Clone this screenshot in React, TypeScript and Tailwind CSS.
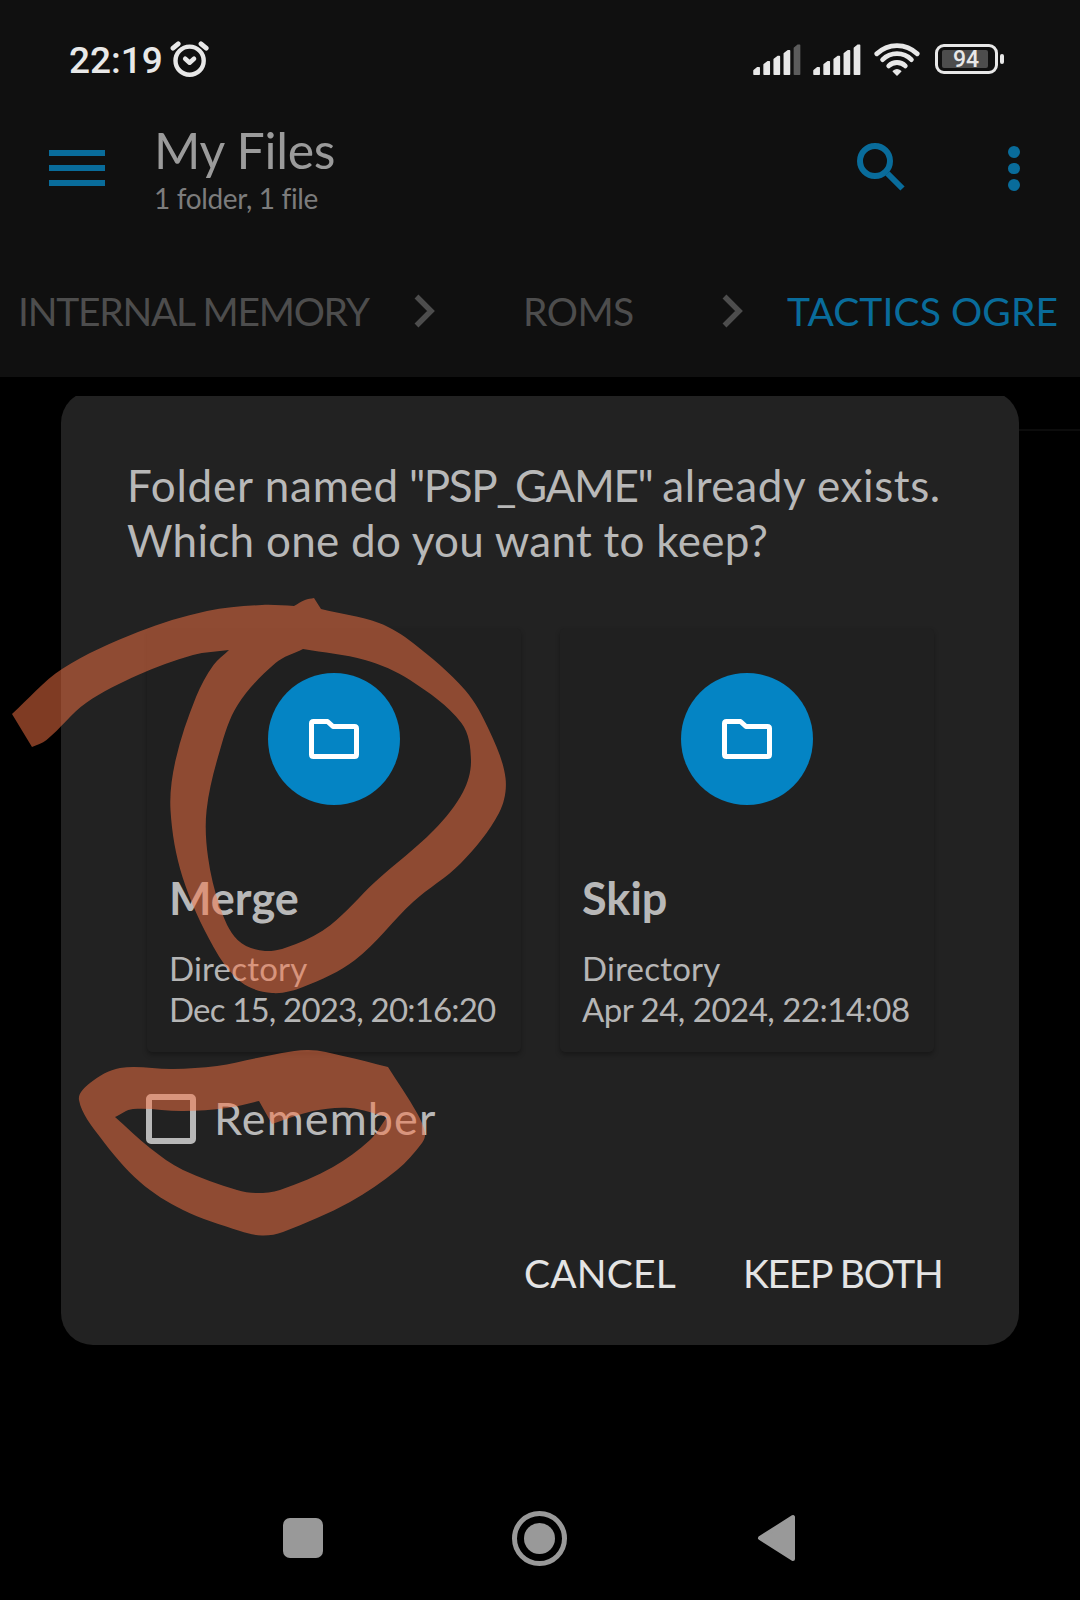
type Point = [number, number];

// Unit tangent at pts[i], taken from its two neighbours.
function tangent(pts: Point[], i: number): Point {
  const a = pts[Math.max(i - 1, 0)];
  const b = pts[Math.min(i + 1, pts.length - 1)];
  const len = Math.hypot(b[0] - a[0], b[1] - a[1]) || 1;
  return [(b[0] - a[0]) / len, (b[1] - a[1]) / len];
}

// Smooth curve through the points of each run; the joints between runs stay sharp.
function outline(runs: Point[][]): string {
  let d = `M${runs[0][0].join(" ")}`;
  for (const pts of runs) {
    for (let i = 0; i < pts.length - 1; i++) {
      const p = pts[i];
      const q = pts[i + 1];
      const h = Math.hypot(q[0] - p[0], q[1] - p[1]) / 3;
      const s = tangent(pts, i);
      const e = tangent(pts, i + 1);
      d += `C${p[0] + s[0] * h} ${p[1] + s[1] * h} ${q[0] - e[0] * h} ${q[1] - e[1] * h} ${q[0]} ${q[1]}`;
    }
  }
  return d + "Z";
}

const circleMark =
  outline([
    [[12, 714], [62, 669], [138, 632], [207, 611], [262, 605], [294, 606]],
    [[294, 606], [305, 600], [314, 598]],
    [[314, 598], [321, 609]],
    [[321, 609], [379, 623], [413, 643], [465, 690], [489, 730], [505.5, 778], [499, 813], [461, 863], [413, 902], [355, 960], [303, 987], [272, 993], [241, 982], [213.5, 947], [182.5, 877], [170.5, 810], [175.6, 760], [196, 697], [213.5, 665], [229, 650]],
    [[229, 650], [193, 655], [138, 675], [86, 703], [46.5, 740], [32, 747]],
    [[32, 747], [12, 714]],
  ]) +
  outline([
    [[303, 649], [275.5, 663], [237.6, 705], [220, 750], [206.6, 810], [208, 857], [220, 907], [237.6, 940], [265, 951], [296, 944], [330.6, 925], [375, 882], [434, 830], [463, 792], [471, 760], [461.4, 723], [410, 680], [365, 660], [303, 649]],
  ]);

const lensMark =
  outline([
    [[388, 1067], [417, 1113], [425, 1133], [422, 1143], [397, 1170], [350, 1202], [283, 1232], [262, 1235.5], [240, 1231], [183, 1210], [140, 1182], [100, 1137], [79, 1100], [90, 1083], [120, 1068], [173, 1069], [217, 1066], [257, 1058], [307, 1050], [343, 1056], [388, 1067]],
  ]) +
  outline([
    [[115, 1117], [133, 1109], [183, 1111], [227, 1108], [259, 1101]],
    [[259, 1101], [272, 1124]],
    [[272, 1124], [313, 1111], [350, 1108], [387, 1117]],
    [[387, 1117], [370, 1140], [333, 1167], [280, 1190], [257, 1193], [237, 1190], [183, 1170], [150, 1148], [115, 1117]],
  ]);

function Signal({ weak = false }: { weak?: boolean }) {
  const tops = [23.7, 17.8, 12.5, 6.8, 1.2];
  return (
    <svg className="h-8 w-12 shrink-0" viewBox="0 0 48 32">
      {tops.map((t, i) => {
        const x = i * 10.1 + 1;
        return (
          <path
            key={t}
            d={`M${x} ${t + 2.8}L${x + 3.6} ${t}H${x + 5.2}V30.2H${x}Z`}
            fill={weak && i === 4 ? "#5c5c5c" : "#e8e8e8"}
            stroke={weak && i === 4 ? "#5c5c5c" : "#e8e8e8"}
            strokeWidth="1.5"
            strokeLinejoin="round"
          />
        );
      })}
    </svg>
  );
}

function StatusBar() {
  return (
    <div className="flex h-[120px] items-start pl-[69px] pt-[40px]">
      <span className="w-[101px] whitespace-nowrap font-[Roboto] text-[37px] font-medium leading-[42px] text-[#e8e8e8]">22:19</span>
      <svg className="h-[38px] w-[40px]" viewBox="0 0 40 38" fill="none" stroke="#e8e8e8" strokeLinecap="round">
        <circle cx="19.600" cy="20.700" r="14.100" strokeWidth="4.400" />
        <path d="M15.200 18.800L19.600 22.700L24 18.800" strokeWidth="4.600" strokeLinejoin="round" />
        <path d="M3 8.200L8.200 3.800M36.200 8.200L31 3.800" strokeWidth="4.800" />
      </svg>
      <div className="ml-[543px] flex items-start pt-[4px]">
        <Signal weak />
        <div className="w-3" />
        <Signal />
        <svg className="-mt-[2px] ml-[13px] h-[36px] w-[46px]" viewBox="0 0 46 36" fill="none" stroke="#e8e8e8" strokeLinecap="round">
          <path d="M2.800 11.800A28.800 28.800 0 0 1 43.200 11.800" strokeWidth="4.800" />
          <path d="M8.600 17.600A20.500 20.500 0 0 1 37.400 17.600" strokeWidth="4.800" />
          <path d="M14.700 23.900A11.800 11.800 0 0 1 31.300 23.900" strokeWidth="4.800" />
          <path d="M19.300 29.300Q23 26.300 26.700 29.300L23 33Z" fill="#e8e8e8" strokeWidth="1.500" strokeLinejoin="round" />
        </svg>
        <div className="ml-[15px] flex h-[30px] w-[63px] items-center rounded-[9px] border-[3px] border-[#e8e8e8] pl-[4px]">
          <div className="h-[18px] w-[46px] rounded-[2px] bg-[#4d4d4d] pl-[11px] font-[Roboto] text-[23px] font-medium leading-[20px] text-[#e8e8e8]">94</div>
        </div>
        <div className="ml-[2px] mt-[10px] h-[10px] w-[4px] rounded-[2px] bg-[#e8e8e8]" />
      </div>
    </div>
  );
}

function TitleBar() {
  return (
    <div className="flex h-[132px] items-start pl-[49px]">
      <div className="mt-[30px] flex w-[56px] flex-col gap-[9px]">
        <div className="h-[6px] bg-[#096c9b]" />
        <div className="h-[6px] bg-[#096c9b]" />
        <div className="h-[6px] bg-[#096c9b]" />
      </div>
      <div className="ml-[49px] w-[703px] whitespace-nowrap">
        <div className="h-[60px] text-[50px] leading-[60px] tracking-[-0.25px] text-[#9b9b9b]">My Files</div>
        <div className="text-[28px] leading-[36px] tracking-[-0.35px] text-[#7c7c7c]">1 folder, 1 file</div>
      </div>
      <svg className="mt-[23px] h-[48px] w-[48px]" viewBox="0 0 48 48" fill="none" stroke="#096c9b" strokeWidth="6">
        <circle cx="18" cy="18" r="15" />
        <path d="M30.500 30.500L45.500 45.500" />
      </svg>
      <div className="ml-[103px] mt-[26px] flex flex-col gap-[5px]">
        <div className="size-[11.500px] rounded-full bg-[#096c9b]" />
        <div className="size-[11.500px] rounded-full bg-[#096c9b]" />
        <div className="size-[11.500px] rounded-full bg-[#096c9b]" />
      </div>
    </div>
  );
}

function Chevron() {
  return (
    <svg className="h-[34px] w-[22px] shrink-0" viewBox="0 0 22 34" fill="none" stroke="#4d4d4d" strokeWidth="5.500">
      <path d="M2.500 2.500L17 17L2.500 31.500" />
    </svg>
  );
}

function Breadcrumbs() {
  return (
    <div className="flex h-[117px] items-center whitespace-nowrap pl-[18px] text-[39px] leading-[48px] text-[#4d4d4d]">
      <span className="w-[396px] tracking-[-1.25px]">INTERNAL MEMORY</span>
      <Chevron />
      <span className="ml-[87px] w-[199px] tracking-[-0.5px]">ROMS</span>
      <Chevron />
      <span className="ml-[43px] tracking-[0.1px] text-[#096c9b]">TACTICS OGRE</span>
    </div>
  );
}

function FolderCard({ title, date, dateClass }: { title: string; date: string; dateClass: string }) {
  return (
    <div className="flex h-[424px] w-[374px] flex-col rounded-[5px] bg-[#202020] pl-[22px] pt-[45px] shadow-[0_3px_5px_rgba(0,0,0,0.3)]">
      <div className="ml-[99px] flex size-[132px] items-center justify-center rounded-full bg-[#0484c4]">
        <svg className="h-[42px] w-[52px]" viewBox="0 0 52 42" fill="none" stroke="#fff" strokeWidth="5" strokeLinejoin="round">
          <path d="M5.500 3.500H19.500L25 8.500H46.500Q48.500 8.500 48.500 10.500V36.500Q48.500 38.500 46.500 38.500H5.500Q3.500 38.500 3.500 36.500V5.500Q3.500 3.500 5.500 3.500Z" />
        </svg>
      </div>
      <div className="mt-[63px] h-[60px] text-[45px] font-bold leading-[60px] text-[#b8b8b8]">{title}</div>
      <div className="mt-[20px] whitespace-nowrap text-[33px] leading-[41px] text-[#b5b5b5]">
        <div className="tracking-[0.2px]">Directory</div>
        <div className={dateClass}>{date}</div>
      </div>
    </div>
  );
}

function Dialog() {
  return (
    <div className="relative ml-[61px] mt-[19px] h-[949px] w-[958px] overflow-hidden">
      <div className="-mt-[5px] h-[954px] rounded-[32px] bg-[#222222] pl-[66px] pt-[67px]">
        <div className="h-[110px] whitespace-nowrap text-[44px] leading-[55px] text-[#b8b8b8]">
          <div>
            <span className="tracking-[0.75px]">Folder named</span>
            <span className="tracking-[-1.4px]"> "PSP_GAME" </span>
            <span className="tracking-[0.6px]">already exists.</span>
          </div>
          <div className="tracking-[0.28px]">Which one do you want to keep?</div>
        </div>
        <div className="ml-[20px] mt-[60px] flex gap-[39px]">
          <FolderCard title="Merge" date="Dec 15, 2023, 20:16:20" dateClass="tracking-[-0.83px]" />
          <FolderCard title="Skip" date="Apr 24, 2024, 22:14:08" dateClass="tracking-[-0.5px]" />
        </div>
        <div className="ml-[19px] mt-[42px] flex h-[50px] items-center">
          <div className="size-[50px] rounded-[5px] border-[6px] border-[#b8b8b8]" />
          <span className="-mt-[2px] ml-[18px] text-[45px] leading-[50px] tracking-[1.1px] text-[#b8b8b8]">Remember</span>
        </div>
        <div className="mt-[105px] flex whitespace-nowrap pl-[397px] text-[39px] leading-[48px] text-[#e4e4e4]">
          <span className="w-[219px] tracking-[0.2px]">CANCEL</span>
          <span className="tracking-[-1.3px]">KEEP BOTH</span>
        </div>
      </div>
    </div>
  );
}

function NavBar() {
  return (
    <div className="mt-auto flex h-[124px] items-center pl-[283px]">
      <div className="size-[40px] rounded-[7px] bg-[#999999]" />
      <div className="ml-[189px] flex size-[55px] items-center justify-center rounded-full border-[5px] border-[#999999]">
        <div className="size-[31px] rounded-full bg-[#999999]" />
      </div>
      <svg className="ml-[190px] h-[48px] w-[39px]" viewBox="0 0 39 48" fill="#999999" stroke="#999999" strokeWidth="4" strokeLinejoin="round">
        <path d="M3 24L36 3V45Z" />
      </svg>
    </div>
  );
}

export default function App() {
  return (
    <div className="relative flex h-[1600px] w-[1080px] flex-col overflow-hidden bg-black font-[Lato,sans-serif]">
      <header className="h-[377px] bg-[#101010]">
        <StatusBar />
        <TitleBar />
        <Breadcrumbs />
      </header>
      <div className="absolute right-0 top-[429px] h-[2px] w-[80px] bg-[#0c0c0c]" />
      <Dialog />
      <NavBar />
      <svg className="pointer-events-none absolute inset-0 h-[1600px] w-[1080px]" viewBox="0 0 1080 1600" fill="#fa7444" fillOpacity="0.51" fillRule="evenodd">
        <path d={circleMark} />
        <path d={lensMark} />
      </svg>
    </div>
  );
}
